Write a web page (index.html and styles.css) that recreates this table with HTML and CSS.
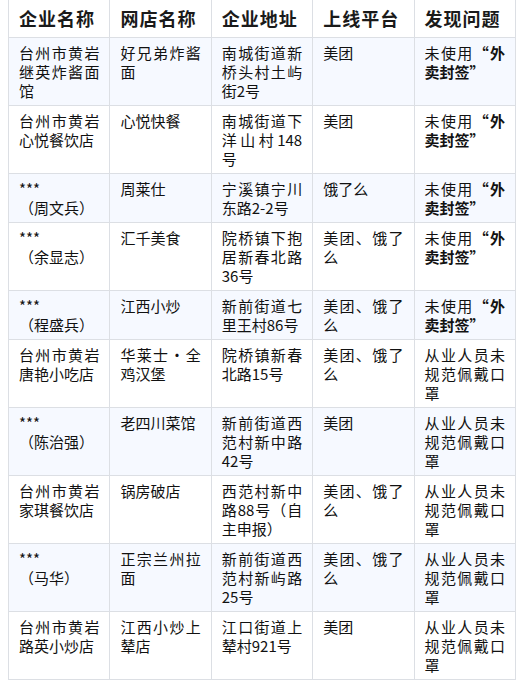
FILE: index.html
```html
<!DOCTYPE html>
<html lang="zh-CN">
<head>
<meta charset="utf-8">
<title>外卖平台检查</title>
<link rel="stylesheet" href="styles.css">
</head>
<body>
<table class="report">
  <thead>
    <tr><th>企业名称</th><th>网店名称</th><th>企业地址</th><th>上线平台</th><th>发现问题</th></tr>
  </thead>
  <tbody>
    <tr><td>台州市黄岩继英炸酱面馆</td><td>好兄弟炸酱面</td><td>南城街道新桥头村土屿街2号</td><td>美团</td><td>未使用<b>“外卖封签”</b></td></tr>
    <tr><td>台州市黄岩心悦餐饮店</td><td>心悦快餐</td><td>南城街道下洋山村148号</td><td>美团</td><td>未使用<b>“外卖封签”</b></td></tr>
    <tr><td>***<br>（周文兵）</td><td>周莱仕</td><td>宁溪镇宁川东路2-2号</td><td>饿了么</td><td>未使用<b>“外卖封签”</b></td></tr>
    <tr><td>***<br>（余显志）</td><td>汇千美食</td><td>院桥镇下抱居新春北路36号</td><td>美团、饿了么</td><td>未使用<b>“外卖封签”</b></td></tr>
    <tr><td>***<br>（程盛兵）</td><td>江西小炒</td><td>新前街道七里王村86号</td><td>美团、饿了么</td><td>未使用<b>“外卖封签”</b></td></tr>
    <tr><td>台州市黄岩唐艳小吃店</td><td>华莱士·全鸡汉堡</td><td>院桥镇新春北路15号</td><td>美团、饿了么</td><td>从业人员未规范佩戴口罩</td></tr>
    <tr><td>***<br>（陈治强）</td><td>老四川菜馆</td><td>新前街道西范村新中路42号</td><td>美团</td><td>从业人员未规范佩戴口罩</td></tr>
    <tr><td>台州市黄岩家琪餐饮店</td><td>锅房破店</td><td>西范村新中路88号（自主申报）</td><td>美团、饿了么</td><td>从业人员未规范佩戴口罩</td></tr>
    <tr><td>***<br>（马华）</td><td>正宗兰州拉面</td><td>新前街道西范村新屿路25号</td><td>美团、饿了么</td><td>从业人员未规范佩戴口罩</td></tr>
    <tr><td>台州市黄岩路英小炒店</td><td>江西小炒上辇店</td><td>江口街道上辇村921号</td><td>美团</td><td>从业人员未规范佩戴口罩</td></tr>
  </tbody>
</table>
</body>
</html>
```
FILE: styles.css
```css
html, body {
  margin: 0;
  background: #ffffff;
}
body {
  padding: 0 8px;
  font-family: "Noto Sans CJK SC", "Noto Sans", sans-serif;
  color: #111111;
}
.report {
  width: 508px;
  margin-top: -1px;
  border-collapse: collapse;
  table-layout: fixed;
}
.report th,
.report td {
  width: 20%;
  border: 1px solid #dcdfe4;
  padding: 5px 10px;
  vertical-align: top;
}
.report th {
  padding: 6px 10px;
  font-size: 18px;
  line-height: 25px;
  font-weight: bold;
  text-align: left;
  letter-spacing: 1px;
  color: #1a1a1a;
}
.report td {
  font-size: 15px;
  line-height: 19px;
  text-align: justify;
}
.report tbody tr:nth-child(odd) td {
  background: #f6f9ff;
}
.report b {
  font-weight: bold;
}
```
